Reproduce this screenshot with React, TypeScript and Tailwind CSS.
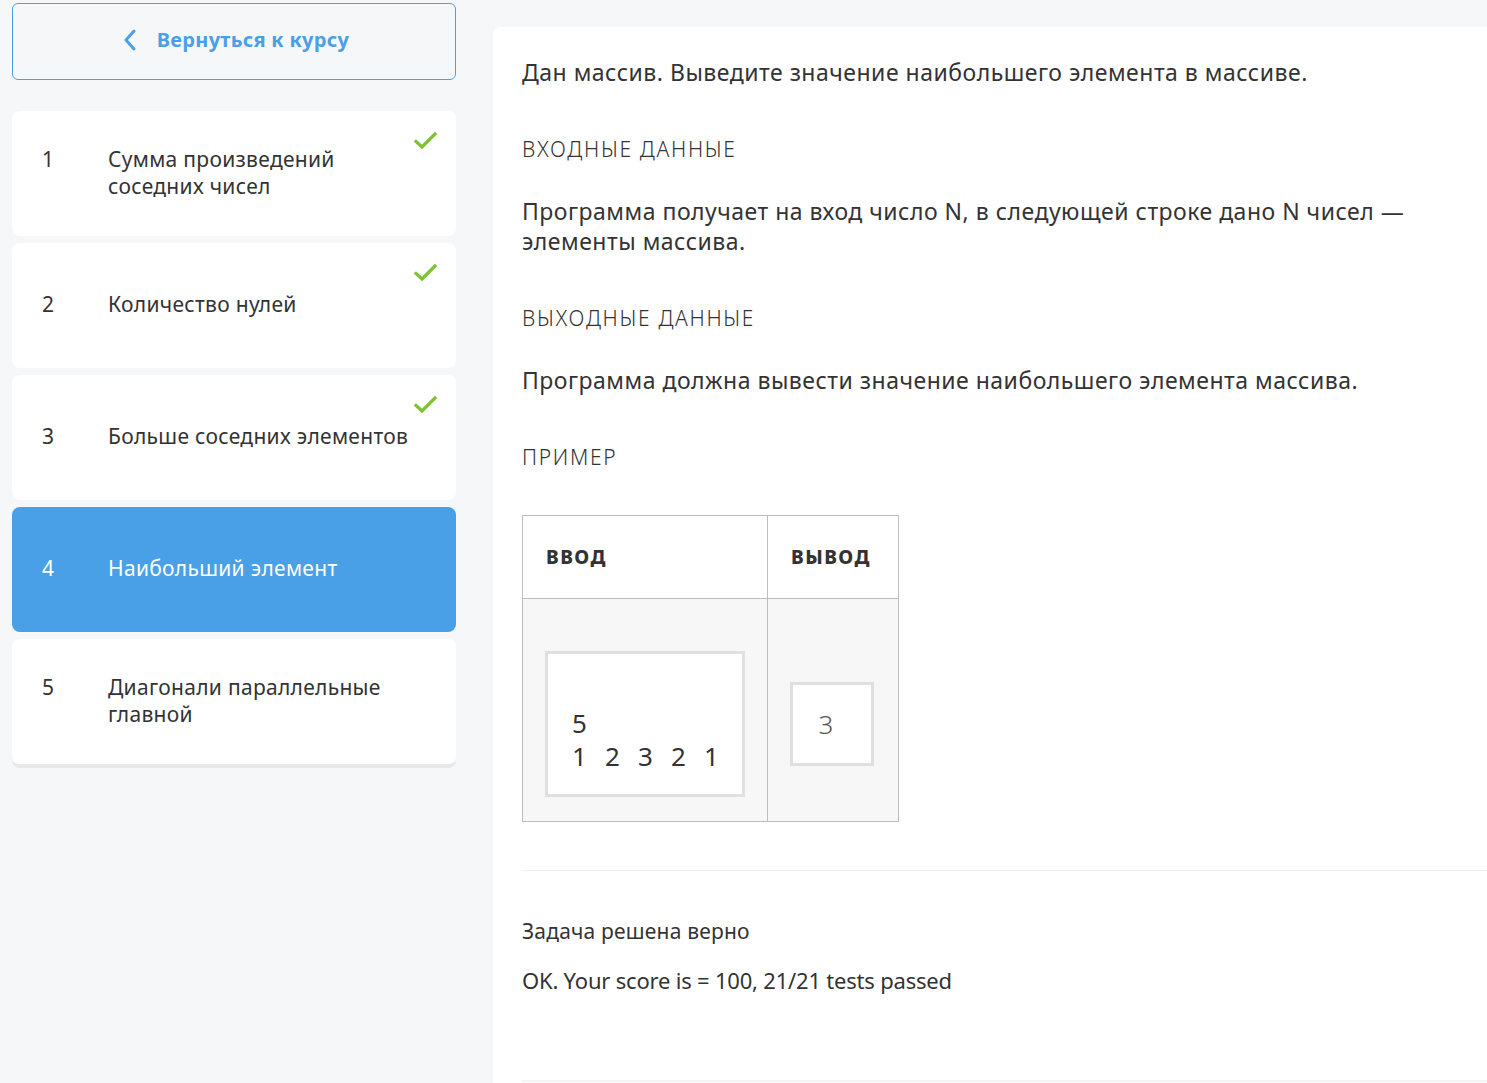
import React from "react";

const FONT = { fontFamily: '"Noto Sans", "Open Sans", sans-serif' };

function Check() {
  return (
    <svg width="24" height="18" viewBox="0 0 24 18" className="absolute right-[19px] top-[21px]">
      <path d="M3 9.5 L9 15 L22 2" fill="none" stroke="#7cc32e" strokeWidth="3.2" strokeLinecap="square" />
    </svg>
  );
}

const tasks = [
  { n: 1, title: ["Сумма произведений", "соседних чисел"], done: true },
  { n: 2, title: ["Количество нулей"], done: true },
  { n: 3, title: ["Больше соседних элементов"], done: true },
  { n: 4, title: ["Наибольший элемент"], done: false, active: true },
  { n: 5, title: ["Диагонали параллельные", "главной"], done: false },
];

export default function App() {
  return (
    <div className="flex min-h-[1083px] w-full bg-[#f6f7f9] text-[#333]" style={FONT}>
      <aside className="w-[493px] shrink-0 pl-[12px] pr-[37px] pt-[3px]">
        <button className="flex h-[77px] w-full items-center justify-center gap-[20px] rounded-[6px] border border-[#4aa0e6] pb-[3px] pl-[4px] text-[20px] font-bold tracking-[0.3px] text-[#4aa0e6]">
          <svg width="14" height="22" viewBox="0 0 14 22">
            <path d="M11 2 L3 11 L11 20" fill="none" stroke="#4aa0e6" strokeWidth="3" strokeLinecap="round" strokeLinejoin="round" />
          </svg>
          <span>Вернуться к курсу</span>
        </button>
        <div className="mt-[31px] flex flex-col gap-[7px] rounded-b-[8px] border-b-[4px] border-[#e6e8eb]">
          {tasks.map((t) => (
            <div
              key={t.n}
              className={
                t.active
                  ? "relative flex h-[125px] items-center rounded-[8px] bg-[#4aa0e6] pb-[2px] text-white"
                  : "relative flex h-[125px] items-center rounded-[8px] bg-white pb-[2px] text-[#333]"
              }
            >
              <div className="flex items-start text-[21px] leading-[27px] tracking-[0.3px]">
                <div className="w-[96px] pl-[30px]">{t.n}</div>
                <div>
                  {t.title.map((l) => (
                    <div key={l}>{l}</div>
                  ))}
                </div>
              </div>
              {t.done && <Check />}
            </div>
          ))}
        </div>
      </aside>
      <main className="mt-[27px] flex-1 rounded-tl-[8px] bg-white pl-[29px] pt-[30px]">
        <p className="text-[23px] leading-[30px] tracking-[0.5px]">Дан массив. Выведите значение наибольшего элемента в массиве.</p>
        <h3 className="mt-[47px] text-[21px] font-light leading-[30px] tracking-[1.7px]">ВХОДНЫЕ ДАННЫЕ</h3>
        <p className="mt-[32px] pr-[40px] text-[23px] leading-[30px] tracking-[0.5px]">
          Программа получает на вход число N, в следующей строке дано N чисел — элементы массива.
        </p>
        <h3 className="mt-[47px] text-[21px] font-light leading-[30px] tracking-[1.7px]">ВЫХОДНЫЕ ДАННЫЕ</h3>
        <p className="mt-[32px] text-[23px] leading-[30px] tracking-[0.5px]">Программа должна вывести значение наибольшего элемента массива.</p>
        <h3 className="mt-[47px] text-[21px] font-light leading-[30px] tracking-[1.7px]">ПРИМЕР</h3>
        <div className="mt-[43px] w-[377px] border border-[#bdbdbd]">
          <div className="flex h-[83px] border-b border-[#bdbdbd] bg-white">
            <div className="flex w-[245px] items-center border-r border-[#bdbdbd] pl-[23px] text-[19px] font-extrabold tracking-[1.5px]">ВВОД</div>
            <div className="flex flex-1 items-center pl-[23px] text-[19px] font-extrabold tracking-[1.5px]">ВЫВОД</div>
          </div>
          <div className="flex h-[222px] bg-[#f7f7f7]">
            <div className="flex w-[245px] items-center border-r border-[#bdbdbd] pl-[22px] pt-[28px]">
              <div className="h-[146px] w-[200px] border-[3px] border-[#e0e0e0] bg-white pl-[24px] pt-[53px] text-[26px] leading-[33px]">
                <div>5</div>
                <div className="flex">
                  {["1", "2", "3", "2", "1"].map((d, i) => (
                    <span key={i} className="w-[33px]">{d}</span>
                  ))}
                </div>
              </div>
            </div>
            <div className="flex flex-1 items-center pl-[22px] pt-[28px]">
              <div className="flex h-[84px] w-[84px] items-center justify-center border-[3px] border-[#e0e0e0] bg-white pr-[12px] text-[26px] font-light text-[#555]">
                3
              </div>
            </div>
          </div>
        </div>
        <div className="mt-[48px] h-px bg-[#f0f0f0]" />
        <p className="mt-[45px] text-[21px] leading-[30px] tracking-[0.2px]">Задача решена верно</p>
        <p className="mt-[19px] text-[22px] leading-[30px] tracking-[-0.2px]">OK. Your score is = 100, 21/21 tests passed</p>
        <div className="mt-[85px] h-[2px] bg-[#f3f4f6]" />
      </main>
    </div>
  );
}
